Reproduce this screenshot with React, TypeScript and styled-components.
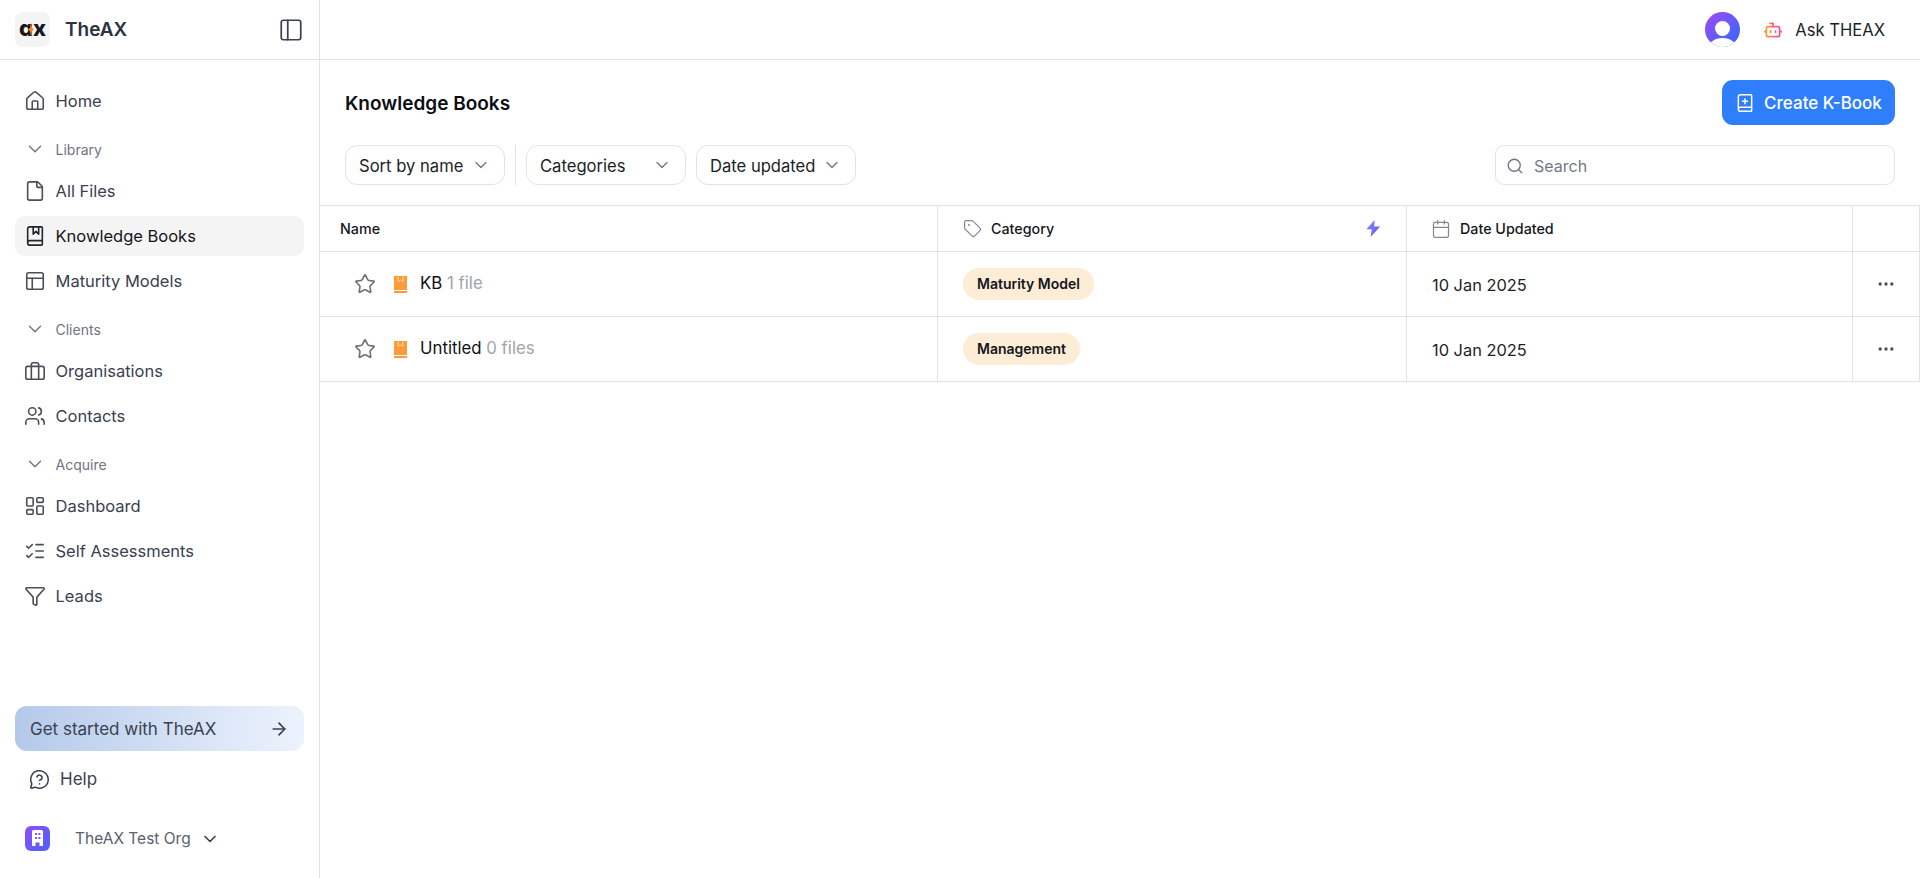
import React from "react";
import styled, { createGlobalStyle } from "styled-components";
import {
  ArrowRight,
  BookMarked,
  BookPlus,
  Calendar,
  ChevronDown,
  Ellipsis,
  File,
  Funnel,
  House,
  LayoutDashboard,
  ListChecks,
  MessageCircleQuestion,
  PanelLeft,
  PanelsTopLeft,
  Search,
  Star,
  Tag,
  Users,
} from "lucide-react";

const GlobalStyle = createGlobalStyle`
  html, body {
    margin: 0;
    height: 100%;
    background: #fff;
  }
  body {
    font-family: "Inter", "Noto Sans", sans-serif;
    color: #1f2430;
  }
  * {
    box-sizing: border-box;
  }
`;

const Page = styled.div`
  display: flex;
  width: 100%;
  height: 878px;
  overflow: hidden;
`;

const Sidebar = styled.aside`
  width: 320px;
  flex-shrink: 0;
  display: flex;
  flex-direction: column;
  border-right: 1px solid #e3e3e3;
`;

const Brand = styled.div`
  height: 60px;
  flex-shrink: 0;
  display: flex;
  align-items: center;
  padding: 0 15px;
  border-bottom: 1px solid #e3e3e3;
  svg.toggle {
    color: #3a4150;
    margin-left: auto;
  }
`;

const LogoBox = styled.div`
  position: relative;
  width: 35px;
  height: 35px;
  border-radius: 8px;
  background: #f4f4f4;
  display: flex;
  align-items: center;
  justify-content: center;
  margin-right: 15px;
  overflow: hidden;
`;

const LogoText = styled.span`
  font-size: 22px;
  line-height: 22px;
  font-weight: 800;
  color: #17171c;
  margin-top: -3px;
`;

const LogoSpark = styled.svg`
  position: absolute;
  left: 13px;
  top: 10px;
`;

const BrandName = styled.span`
  font-size: 19px;
  font-weight: 600;
  color: #2b3240;
`;

const Nav = styled.nav`
  flex: 1;
  display: flex;
  flex-direction: column;
  padding: 21px 15px 0;
`;

const NavItem = styled.a<{ $active?: boolean }>`
  height: 40px;
  margin-bottom: 5px;
  display: flex;
  align-items: center;
  gap: 9.5px;
  padding: 0 9px;
  border-radius: 10px;
  font-size: 16.5px;
  color: ${(p) => (p.$active ? "#14161c" : "#3a4150")};
  background: ${(p) => (p.$active ? "#f4f4f4" : "transparent")};
  svg {
    flex-shrink: 0;
    color: ${(p) => (p.$active ? "#22262e" : "#4a4f5a")};
  }
`;

const NavSection = styled.div`
  height: 20px;
  margin: 13px 0 12px;
  display: flex;
  align-items: center;
  gap: 9.5px;
  padding: 0 9px;
  font-size: 14px;
  color: #6f7480;
  svg {
    color: #6f7480;
  }
`;

const GetStarted = styled.a`
  height: 45px;
  margin: 0 15px;
  padding: 0 15px;
  flex-shrink: 0;
  display: flex;
  align-items: center;
  justify-content: space-between;
  border-radius: 12px;
  background: linear-gradient(90deg, #b4c9ea 0%, #edf3fd 100%);
  font-size: 17px;
  color: #3a4150;
  svg {
    color: #3a4150;
  }
`;

const HelpLink = styled.a`
  height: 38px;
  margin: 9px 15px 0;
  padding: 0 14px;
  flex-shrink: 0;
  display: flex;
  align-items: center;
  gap: 10px;
  font-size: 17px;
  color: #3a4150;
`;

const OrgSwitch = styled.div`
  height: 25px;
  margin: 28px 0 27px 25px;
  flex-shrink: 0;
  display: flex;
  align-items: center;
  font-size: 15.5px;
  color: #5a606c;
  svg.chevron {
    margin-left: 9px;
    color: #3a4150;
  }
`;

const OrgIcon = styled.div`
  width: 25px;
  height: 25px;
  margin-right: 25px;
  border-radius: 6px;
  background: linear-gradient(135deg, #8f4df5 0%, #4d62fa 100%);
  display: flex;
  align-items: center;
  justify-content: center;
`;

const Main = styled.main`
  flex: 1;
  min-width: 0;
  display: flex;
  flex-direction: column;
`;

const TopBar = styled.header`
  height: 60px;
  flex-shrink: 0;
  display: flex;
  align-items: center;
  justify-content: flex-end;
  padding-right: 35px;
  border-bottom: 1px solid #e3e3e3;
`;

const Avatar = styled.div`
  position: relative;
  width: 35px;
  height: 35px;
  border-radius: 50%;
  background: linear-gradient(135deg, #a148f2 0%, #4a62fb 75%);
  overflow: hidden;
  margin-right: 23px;
`;

const AvatarHead = styled.span`
  position: absolute;
  left: 10px;
  top: 9px;
  width: 15px;
  height: 15px;
  border-radius: 50%;
  background: #fff;
`;

const AvatarBody = styled.span`
  position: absolute;
  left: 3px;
  top: 26px;
  width: 29px;
  height: 22px;
  border-radius: 50%;
  background: #fff;
`;

const AskButton = styled.a`
  display: flex;
  align-items: center;
  gap: 12px;
  font-size: 16.6px;
  color: #1c1f26;
`;

const TitleRow = styled.div`
  height: 45px;
  margin-top: 20px;
  padding: 0 25px;
  flex-shrink: 0;
  display: flex;
  align-items: center;
  justify-content: space-between;
`;

const Title = styled.h1`
  margin: 2px 0 0;
  font-size: 19px;
  font-weight: 600;
  color: #0c0e12;
`;

const PrimaryButton = styled.button`
  height: 45px;
  width: 173px;
  border: 0;
  border-radius: 11px;
  background: #2f7ffc;
  color: #fff;
  font-family: inherit;
  font-size: 17px;
  font-weight: 500;
  display: flex;
  align-items: center;
  justify-content: center;
  gap: 9px;
`;

const FilterRow = styled.div`
  height: 40px;
  margin-top: 20px;
  padding: 0 25px;
  flex-shrink: 0;
  display: flex;
  align-items: center;
`;

const Dropdown = styled.div<{ $gap?: number }>`
  width: 160px;
  height: 40px;
  margin-right: ${(p) => p.$gap ?? 0}px;
  padding: 2px 13px 0;
  border: 1px solid #e3e3e3;
  border-radius: 12px;
  display: flex;
  align-items: center;
  justify-content: space-between;
  font-size: 16.6px;
  color: #1c1f26;
  svg {
    color: #6f7480;
    margin-top: -2px;
  }
`;

const Divider = styled.div`
  width: 1px;
  height: 40px;
  background: #e3e3e3;
  margin-right: 10px;
`;

const SearchBox = styled.div`
  width: 400px;
  height: 40px;
  margin-left: auto;
  padding: 1px 10px 0;
  border: 1px solid #e3e3e3;
  border-radius: 9px;
  display: flex;
  align-items: center;
  gap: 10px;
  font-size: 16px;
  color: #747985;
  svg {
    color: #6f7480;
  }
`;

const Table = styled.div`
  margin-top: 20px;
  border-top: 1px solid #e3e3e3;
`;

const Row = styled.div<{ $height: number }>`
  height: ${(p) => p.$height}px;
  display: grid;
  grid-template-columns: 618px 469px 446px 1fr;
  border-bottom: 1px solid #e3e3e3;
`;

const Cell = styled.div<{ $pad?: number }>`
  display: flex;
  align-items: center;
  padding-left: ${(p) => p.$pad ?? 0}px;
  border-right: 1px solid #e3e3e3;
  &:last-child {
    justify-content: center;
    padding-right: 1px;
  }
`;

const HeadLabel = styled.span`
  font-size: 14.3px;
  font-weight: 500;
  color: #15171d;
`;

const HeadIcon = styled.span`
  display: flex;
  margin-right: 9px;
  color: #85888f;
`;

const BoltIcon = styled.svg`
  margin-left: auto;
  margin-right: 25px;
`;

const StarIcon = styled(Star)`
  color: #6f7176;
  margin-right: 18px;
`;

const BookIcon = styled.svg`
  margin-right: 13px;
`;

const RowName = styled.span`
  font-size: 16.8px;
  color: #0f1116;
  margin-top: -2px;
`;

const RowCount = styled.span`
  color: #a0a4aa;
`;

const Chip = styled.span`
  height: 32px;
  padding: 0 14px;
  border-radius: 16px;
  background: #fdedd6;
  display: inline-flex;
  align-items: center;
  font-size: 14px;
  font-weight: 600;
  color: #14161c;
  margin-top: -1px;
`;

const DateText = styled.span`
  font-size: 16.4px;
  color: #1c1f26;
  margin-top: 1px;
`;

const BriefcaseIcon = () => (
  <svg width="22" height="22" viewBox="0 0 24 24" fill="none" stroke="currentColor" strokeWidth="1.75" strokeLinecap="round" strokeLinejoin="round">
    <rect x="2" y="7" width="20" height="14" rx="2" />
    <path d="M8 21V5a2 2 0 0 1 2-2h4a2 2 0 0 1 2 2v16" />
  </svg>
);

const BuildingGlyph = () => (
  <svg width="15" height="17" viewBox="0 0 15 17" fill="#fff">
    <path d="M2 1.5A1.5 1.5 0 0 1 3.5 0h8A1.5 1.5 0 0 1 13 1.5V16H9.5v-3.5h-4V16H2z" />
    <rect x="5" y="3" width="2" height="2" fill="#7a55f8" />
    <rect x="8.4" y="3" width="2" height="2" fill="#7a55f8" />
    <rect x="5" y="7" width="2" height="2" fill="#7a55f8" />
    <rect x="8.4" y="7" width="2" height="2" fill="#7a55f8" />
  </svg>
);

const OrangeBook = () => (
  <BookIcon width="13" height="17" viewBox="0 0 13 17">
    <rect x="0" y="0" width="13" height="14" fill="#fd9a3a" />
    <path d="M4 0.5v5l2.5-1.6 2.5 1.6v-5" fill="none" stroke="#ffdcb2" strokeWidth="1" />
    <rect x="0" y="15" width="13" height="2" fill="#fd9a3a" />
  </BookIcon>
);

const Bolt = () => (
  <BoltIcon width="15" height="17" viewBox="0 0 15 17">
    <defs>
      <linearGradient id="boltFill" x1="0" y1="0" x2="1" y2="1">
        <stop offset="0" stopColor="#5f9bfb" />
        <stop offset="1" stopColor="#8a3ff5" />
      </linearGradient>
    </defs>
    <path d="M8.6 0 0.4 9.2h5.4L4.6 17l9.6-10.4H8.2z" fill="url(#boltFill)" />
  </BoltIcon>
);

const rows = [
  { name: "KB", count: "1 file", category: "Maturity Model", date: "10 Jan 2025" },
  { name: "Untitled", count: "0 files", category: "Management", date: "10 Jan 2025" },
];

export default function App() {
  return (
    <Page>
      <GlobalStyle />
      <Sidebar>
        <Brand>
          <LogoBox>
            <LogoText>ɑx</LogoText>
            <LogoSpark width="6" height="15" viewBox="0 0 6 15">
              <path d="M3 0 4 6 6 7.5 4 9 3 15 2 9 0 7.5 2 6z" fill="#f28a2e" />
            </LogoSpark>
          </LogoBox>
          <BrandName>TheAX</BrandName>
          <PanelLeft className="toggle" size={26} strokeWidth={1.6} />
        </Brand>
        <Nav>
          <NavItem><House size={22} strokeWidth={1.75} />Home</NavItem>
          <NavSection><ChevronDown size={22} strokeWidth={1.5} />Library</NavSection>
          <NavItem><File size={22} strokeWidth={1.75} />All Files</NavItem>
          <NavItem $active><BookMarked size={22} strokeWidth={1.75} />Knowledge Books</NavItem>
          <NavItem><PanelsTopLeft size={22} strokeWidth={1.75} />Maturity Models</NavItem>
          <NavSection><ChevronDown size={22} strokeWidth={1.5} />Clients</NavSection>
          <NavItem><BriefcaseIcon />Organisations</NavItem>
          <NavItem><Users size={22} strokeWidth={1.75} />Contacts</NavItem>
          <NavSection><ChevronDown size={22} strokeWidth={1.5} />Acquire</NavSection>
          <NavItem><LayoutDashboard size={22} strokeWidth={1.75} />Dashboard</NavItem>
          <NavItem><ListChecks size={22} strokeWidth={1.75} />Self Assessments</NavItem>
          <NavItem><Funnel size={22} strokeWidth={1.75} />Leads</NavItem>
        </Nav>
        <GetStarted>Get started with TheAX<ArrowRight size={20} /></GetStarted>
        <HelpLink><MessageCircleQuestion size={21} strokeWidth={1.75} />Help</HelpLink>
        <OrgSwitch>
          <OrgIcon><BuildingGlyph /></OrgIcon>
          TheAX Test Org
          <ChevronDown className="chevron" size={20} strokeWidth={2} />
        </OrgSwitch>
      </Sidebar>
      <Main>
        <TopBar>
          <Avatar><AvatarHead /><AvatarBody /></Avatar>
          <AskButton>
            <svg width="20" height="20" viewBox="0 0 24 24" fill="none" stroke="url(#botStroke)" strokeWidth="2" strokeLinecap="round" strokeLinejoin="round">
              <defs>
                <linearGradient id="botStroke" x1="0" y1="0" x2="1" y2="0" gradientUnits="objectBoundingBox">
                  <stop offset="0" stopColor="#fb9a2c" />
                  <stop offset="1" stopColor="#f34fa3" />
                </linearGradient>
              </defs>
              <path d="M12 8V4H8" />
              <rect x="4" y="8" width="16" height="12" rx="2" />
              <path d="M2 14h2M20 14h2M15 13v2M9 13v2" />
            </svg>
            Ask THEAX
          </AskButton>
        </TopBar>
        <TitleRow>
          <Title>Knowledge Books</Title>
          <PrimaryButton><BookPlus size={20} strokeWidth={1.75} />Create K-Book</PrimaryButton>
        </TitleRow>
        <FilterRow>
          <Dropdown $gap={10}>Sort by name<ChevronDown size={20} strokeWidth={1.5} /></Dropdown>
          <Divider />
          <Dropdown $gap={10}>Categories<ChevronDown size={20} strokeWidth={1.5} /></Dropdown>
          <Dropdown>Date updated<ChevronDown size={20} strokeWidth={1.5} /></Dropdown>
          <SearchBox><Search size={18} strokeWidth={1.75} />Search</SearchBox>
        </FilterRow>
        <Table>
          <Row $height={46}>
            <Cell $pad={20}><HeadLabel>Name</HeadLabel></Cell>
            <Cell $pad={25}>
              <HeadIcon><Tag size={19} strokeWidth={1.5} /></HeadIcon>
              <HeadLabel>Category</HeadLabel>
              <Bolt />
            </Cell>
            <Cell $pad={24}>
              <HeadIcon><Calendar size={20} strokeWidth={1.5} /></HeadIcon>
              <HeadLabel>Date Updated</HeadLabel>
            </Cell>
            <Cell />
          </Row>
          {rows.map((row) => (
            <Row $height={65} key={row.name}>
              <Cell $pad={34}>
                <StarIcon size={22} strokeWidth={1.75} />
                <OrangeBook />
                <RowName>{row.name} <RowCount>{row.count}</RowCount></RowName>
              </Cell>
              <Cell $pad={25}><Chip>{row.category}</Chip></Cell>
              <Cell $pad={25}><DateText>{row.date}</DateText></Cell>
              <Cell><Ellipsis size={20} color="#4a4f5a" /></Cell>
            </Row>
          ))}
        </Table>
      </Main>
    </Page>
  );
}
